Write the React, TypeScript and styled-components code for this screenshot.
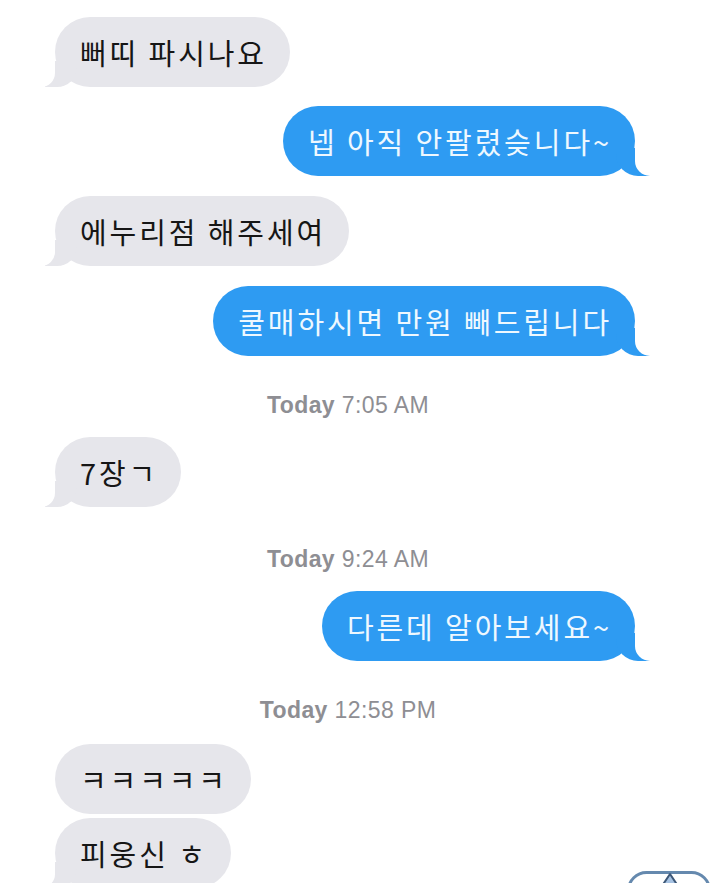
import styled, { createGlobalStyle, css } from 'styled-components';

const GlobalStyle = createGlobalStyle`
  html, body {
    margin: 0;
    padding: 0;
    background: #ffffff;
  }
`;

type Side = 'them' | 'me';

type Item =
  | { kind: 'msg'; side: Side; text: string; tail: boolean; mt: number }
  | { kind: 'stamp'; day: string; time: string; mt: number };

const items: Item[] = [
  { kind: 'msg', side: 'them', text: '뻐띠 파시나요', tail: true, mt: 0 },
  { kind: 'msg', side: 'me', text: '넵 아직 안팔렸슺니다~', tail: true, mt: 19 },
  { kind: 'msg', side: 'them', text: '에누리점 해주세여', tail: true, mt: 20 },
  { kind: 'msg', side: 'me', text: '쿨매하시면 만원 빼드립니다', tail: true, mt: 20 },
  { kind: 'stamp', day: 'Today', time: '7:05 AM', mt: 36 },
  { kind: 'msg', side: 'them', text: '7장ㄱ', tail: true, mt: 19 },
  { kind: 'stamp', day: 'Today', time: '9:24 AM', mt: 39 },
  { kind: 'msg', side: 'me', text: '다른데 알아보세요~', tail: true, mt: 19 },
  { kind: 'stamp', day: 'Today', time: '12:58 PM', mt: 36 },
  { kind: 'msg', side: 'them', text: 'ㅋㅋㅋㅋㅋ', tail: false, mt: 21 },
  { kind: 'msg', side: 'them', text: '피웅신 ㅎ', tail: true, mt: 4 },
];

const Screen = styled.div`
  position: relative;
  width: 716px;
  height: 883px;
  overflow: hidden;
  background: #ffffff;
`;

const Thread = styled.div`
  display: flex;
  flex-direction: column;
  padding: 17px 81px 0 55px;
`;

const Row = styled.div<{ $side: Side | 'center'; $mt: number }>`
  display: flex;
  justify-content: ${(p) =>
    p.$side === 'me' ? 'flex-end' : p.$side === 'center' ? 'center' : 'flex-start'};
  margin-top: ${(p) => p.$mt}px;
`;

// iMessage-style tail: a coloured block carved by a white block with a round corner
const tailThem = css`
  &::before {
    content: '';
    position: absolute;
    bottom: 0;
    left: -10px;
    width: 32px;
    height: 26px;
    background: #e6e6eb;
    border-bottom-right-radius: 20px;
  }
  &::after {
    content: '';
    position: absolute;
    bottom: 0;
    left: -30px;
    width: 30px;
    height: 26px;
    background: #ffffff;
    border-bottom-right-radius: 14px;
  }
`;

const tailMe = css`
  &::before {
    content: '';
    position: absolute;
    bottom: 0;
    right: -17px;
    width: 36px;
    height: 28px;
    background: #2e9bf2;
    border-bottom-left-radius: 22px;
  }
  &::after {
    content: '';
    position: absolute;
    bottom: 0;
    right: -36px;
    width: 36px;
    height: 28px;
    background: #ffffff;
    border-bottom-left-radius: 15px;
  }
`;

const Bubble = styled.div<{ $side: Side; $tail: boolean }>`
  position: relative;
  z-index: 0;
  display: flex;
  align-items: center;
  height: 70px;
  padding: 0 23px 0 25px;
  border-radius: 35px;
  box-sizing: border-box;
  font-family: 'Noto Sans CJK KR', 'Noto Sans', sans-serif;
  font-size: 29px;
  letter-spacing: 2.9px;
  white-space: nowrap;
  background: ${(p) => (p.$side === 'me' ? '#2e9bf2' : '#e6e6eb')};
  color: ${(p) => (p.$side === 'me' ? '#eef8ff' : '#161616')};

  ${(p) => p.$tail && (p.$side === 'me' ? tailMe : tailThem)}

  &::before,
  &::after {
    z-index: -1;
  }
`;

const BubbleText = styled.span`
  position: relative;
`;

const Stamp = styled.div`
  height: 26px;
  line-height: 26px;
  padding-left: 6px;
  text-align: center;
  font-family: 'Liberation Sans', Arial, sans-serif;
  font-size: 23px;
  letter-spacing: 0.4px;
  color: #8e8e93;
`;

const StampDay = styled.span`
  font-weight: 700;
`;

const ScrollTop = styled.svg`
  position: absolute;
  left: 624px;
  top: 868px;
`;

export default function App() {
  return (
    <Screen>
      <GlobalStyle />
      <Thread>
        {items.map((it, i) =>
          it.kind === 'msg' ? (
            <Row key={i} $side={it.side} $mt={it.mt}>
              <Bubble $side={it.side} $tail={it.tail}>
                <BubbleText>{it.text}</BubbleText>
              </Bubble>
            </Row>
          ) : (
            <Row key={i} $side="center" $mt={it.mt}>
              <Stamp>
                <StampDay>{it.day}</StampDay> {it.time}
              </Stamp>
            </Row>
          )
        )}
      </Thread>
      <ScrollTop width="90" height="30" viewBox="0 0 90 30">
        <rect x="4.5" y="4.5" width="81" height="40" rx="18" fill="#ffffff" stroke="#6589ae" strokeWidth="3" />
        <path d="M38 18 L46 6 L54 18 L54 30 L38 30 Z" fill="#a6c2e2" stroke="#3d5878" strokeWidth="2" strokeLinejoin="round" />
      </ScrollTop>
    </Screen>
  );
}
